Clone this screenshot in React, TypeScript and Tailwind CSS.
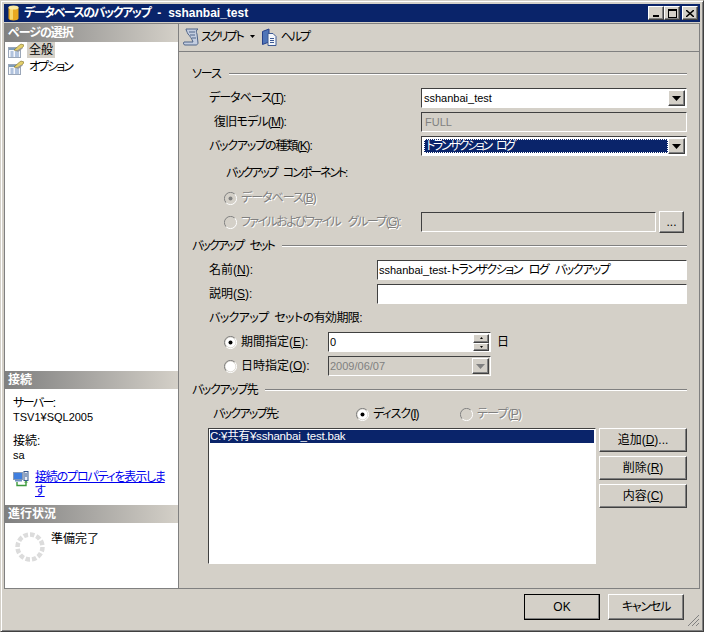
import React from 'react';

const sunken = 'border border-t-[#404040] border-l-[#404040] border-r-white border-b-white bg-white';
const sunkenOff = 'border border-t-[#404040] border-l-[#404040] border-r-white border-b-white bg-[#d4d0c8]';
const raised = 'border border-t-white border-l-white border-r-[#404040] border-b-[#404040] bg-[#d4d0c8] shadow-[inset_-1px_-1px_0_#808080]';
const disabledText = 'text-[#808080] [text-shadow:1px_1px_0_#fff]';

const U = ({ children }: { children: React.ReactNode }) => <span className="underline">{children}</span>;

const Row = ({ children, className = '' }: { children: React.ReactNode; className?: string }) => (
  <div className={`flex items-center h-5 mb-1 ${className}`}>{children}</div>
);

const Heading = ({ children }: { children: React.ReactNode }) => (
  <Row>
    <span className="mr-2 whitespace-nowrap">{children}</span>
    <div className="flex-1 h-[2px] border-t border-t-[#808080] border-b border-b-white" />
  </Row>
);

const Arrow = ({ off }: { off?: boolean }) => (
  <div className={`w-[17px] h-[16px] mr-[1px] flex items-center justify-center ${raised}`}>
    <svg width="9" height="5" viewBox="0 0 9 5"><path d="M0 0h9L4.5 5z" fill={off ? '#808080' : '#000'} /></svg>
  </div>
);

const Combo = ({ children, selected, width = 'w-[266px]' }: { children: React.ReactNode; selected?: boolean; width?: string }) => (
  <div className={`${width} h-5 flex items-center pl-[2px] ${sunken}`}>
    {selected ? (
      <div className="flex-1 h-[14px] bg-[#0a246a] text-white flex items-center pl-[1px] border border-dotted border-white leading-none tracking-[-2.300px] [word-spacing:4px]">{children}</div>
    ) : (
      <div className="flex-1 leading-none text-[11px]">{children}</div>
    )}
    <Arrow />
  </div>
);

const Radio = ({ checked, off }: { checked?: boolean; off?: boolean }) => (
  <svg width="13" height="13" viewBox="0 0 13 13" className="shrink-0">
    <path d="M10.8 2.2A6 6 0 0 0 2.2 10.8" fill="none" stroke="#808080" />
    <path d="M2.2 10.8A6 6 0 0 0 10.8 2.2" fill="none" stroke="#fff" />
    <circle cx="6.5" cy="6.5" r="5" fill={off ? '#d4d0c8' : '#fff'} />
    {checked && <circle cx="6.5" cy="6.5" r="2" fill={off ? '#808080' : '#000'} />}
  </svg>
);

const PageIcon = () => (
  <svg width="16" height="15" viewBox="0 0 16 15" className="shrink-0">
    <rect x="0.5" y="4.500" width="12" height="10" fill="#f4f6fa" stroke="#9aa6b8" />
    <path d="M1 6h11" stroke="#7f9db9" strokeWidth="2" />
    <path d="M2.500 9h3M7 9h4M2.500 11h3M7 11h4M2.500 13h3M7 13h4" stroke="#6f8fc0" />
    <path d="M6 7 11 2.500 13 1l3 1-1 2-5 4z" fill="#e3cf6b" stroke="#7a6c24" strokeWidth="0.600" />
    <path d="M8 8l5-3 2 0-4 3.500z" fill="#9a9a9a" />
  </svg>
);

const SectionHeader = ({ children }: { children: React.ReactNode }) => (
  <div className="h-[18px] pl-[3px] flex items-center font-bold text-white text-[12px] bg-gradient-to-r from-[#808080] to-[#d4d0c8] whitespace-nowrap">
    {children}
  </div>
);

const Spinner = () => (
  <svg width="32" height="32" viewBox="0 0 32 32" className="shrink-0">
    <circle cx="16" cy="16" r="12.500" fill="none" stroke="#dcdcdc" strokeWidth="4.500" strokeDasharray="4.500 2" />
  </svg>
);

const SideButton = ({ children }: { children: React.ReactNode }) => (
  <div className={`w-[88px] h-6 flex items-center justify-center mb-1 ${raised}`}>{children}</div>
);

export default function App() {
  return (
    <div className="w-[704px] h-[632px] bg-[#d4d0c8] text-[12px] text-black overflow-hidden border border-t-[#d4d0c8] border-l-[#d4d0c8] border-r-[#404040] border-b-[#404040] font-['Liberation_Sans','Noto_Sans_CJK_JP',sans-serif] [font-feature-settings:'palt'] shadow-[inset_1px_1px_0_#fff,inset_-1px_-1px_0_#808080]">
      <div className="p-[3px] pb-0 h-[626px] flex flex-col">
        {/* title bar */}
        <div className="h-[18px] bg-[#0a246a] flex items-center pl-[4px] pr-[2px] shrink-0">
          <svg width="11" height="16" viewBox="0 0 11 16" className="shrink-0">
            <path d="M0.500 2.500v11c0 2.500 10 2.500 10 0v-11z" fill="#e8a820" />
            <path d="M2 3v11.500h3V3z" fill="#f7d66a" />
            <ellipse cx="5.500" cy="2.500" rx="5" ry="2" fill="#fbe9a0" />
          </svg>
          <span className="ml-[5px] text-white font-bold whitespace-nowrap tracking-[-1.450px]">データベースのバックアップ</span>
          <span className="ml-[7px] text-white font-bold">-</span>
          <span className="ml-[7px] text-white font-bold">sshanbai_test</span>
          <div className="ml-auto flex">
            <div className={`w-4 h-[14px] flex items-end justify-center pb-[2px] ${raised}`}>
              <div className="w-[6px] h-[2px] bg-black" />
            </div>
            <div className={`w-4 h-[14px] flex items-center justify-center ${raised}`}>
              <div className="w-[9px] h-[9px] border border-black border-t-2" />
            </div>
            <div className={`w-4 h-[14px] ml-[2px] flex items-center justify-center ${raised}`}>
              <svg width="8" height="7" viewBox="0 0 8 7"><path d="M0 0 8 7M8 0 0 7" stroke="#000" strokeWidth="1.500" /></svg>
            </div>
          </div>
        </div>

        <div className="mt-[1px] h-[566px] flex shrink-0 border-b border-b-[#808080]">
          {/* left pane */}
          <div className="w-[175px] bg-white flex flex-col border-l border-l-[#808080] border-r border-r-[#808080] border-t border-t-[#808080]">
            <div className="h-[347px]">
              <SectionHeader><span className="tracking-[-1px]">ページの選択</span></SectionHeader>
              <div className="h-4 flex items-center pl-[3px]">
                <PageIcon />
                <span className="ml-[3px] px-[2px] bg-[#d4d0c8] text-[12px] leading-4">全般</span>
              </div>
              <div className="h-4 mt-[1px] flex items-center pl-[3px]">
                <PageIcon />
                <span className="ml-[5px] text-[12px] tracking-[-2px]">オプション</span>
              </div>
            </div>
            <div className="h-[134px]">
              <SectionHeader>接続</SectionHeader>
              <div className="pl-[8px] pt-[7px] leading-[14px]">
                <div className="tracking-[-1.600px]">サーバー:</div>
                <div className="text-[11px]">TSV1¥SQL2005</div>
                <div className="mt-[10px]">接続:</div>
                <div className="text-[11px]">sa</div>
                <div className="flex mt-[8px]">
                  <svg width="16" height="16" viewBox="0 0 16 16" className="shrink-0 mt-[1px]">
                    <rect x="0.500" y="1.500" width="9" height="7" fill="#3f7fe0" stroke="#8a9bb5" />
                    <rect x="2" y="8.500" width="7" height="2" fill="#6f8fc0" />
                    <rect x="11" y="0.500" width="4" height="9" fill="#e8ecf5" stroke="#35588f" />
                    <path d="M12 3h2M12 5h2" stroke="#35588f" />
                    <path d="M4 11v3.500h9V11" fill="none" stroke="#3c9a3c" strokeWidth="1.400" />
                    <path d="M11 11.500l2-2 2 2z" fill="#3c9a3c" />
                  </svg>
                  <a href="#" className="ml-[6px] w-[132px] text-[#0000ee] underline leading-[14px] tracking-[-1.200px]">接続のプロパティを表示します</a>
                </div>
              </div>
            </div>
            <div className="flex-1">
              <SectionHeader>進行状況</SectionHeader>
              <div className="flex pl-[9px] pt-[8px]">
                <Spinner />
                <span className="ml-[5px] text-[12px] leading-[16px]">準備完了</span>
              </div>
            </div>
          </div>

          {/* right pane */}
          <div className="flex-1 flex flex-col border-r border-r-[#808080] border-t border-t-[#808080]">
            <div className="h-[28px] flex items-center pl-[4px] pb-[2px] border-b border-b-[#808080] shrink-0">
              <svg width="16" height="18" viewBox="0 0 16 18" className="shrink-0">
                <path d="M3 1h12c-2 1-2 3-1 5l1 9c0 1-1 2-2 2H2c-1.500 0-2-2-1-3h9c-1-3-3-6-5-8-1-2-2-4-2-5z" fill="#c3cde0" stroke="#4f6488" />
                <path d="M6 4h6M7 7h5M9 10h4" stroke="#4f6488" />
              </svg>
              <span className="ml-[2px] whitespace-nowrap tracking-[-2px]">スクリプト</span>
              <svg width="5" height="3" viewBox="0 0 5 3" className="ml-[7px]"><path d="M0 0h5L2.500 3z" fill="#000" /></svg>
              <svg width="16" height="18" viewBox="0 0 16 18" className="ml-[7px] shrink-0">
                <path d="M0.500 3.500 7 1v13l-6.500 2.500z" fill="#4f74b8" stroke="#26408a" />
                <path d="M6 5.500h5l3 3v9H6z" fill="#f4f6fa" stroke="#3d5a94" />
                <path d="M8 10.500h4M8 12.500h4M8 14.500h4" stroke="#3d5a94" />
              </svg>
              <span className="ml-[3px] whitespace-nowrap tracking-[-2px]">ヘルプ</span>
            </div>

            <div className="pl-[13px] pt-[12px] w-[508px]">
              <Heading><span className="tracking-[-1px]">ソース</span></Heading>
              <Row>
                <span className="ml-[17px] w-[212px] tracking-[-1px]">データベース(<U>T</U>):</span>
                <Combo>sshanbai_test</Combo>
              </Row>
              <Row>
                <span className="ml-[22px] w-[207px] tracking-[-0.800px]">復旧モデル(<U>M</U>):</span>
                <div className={`w-[266px] h-5 flex items-center pl-[3px] text-[#808080] text-[11px] ${sunkenOff}`}>FULL</div>
              </Row>
              <Row>
                <span className="ml-[17px] w-[212px] tracking-[-1.200px]">バックアップの種類(<U>K</U>):</span>
                <Combo selected>トランザクション ログ</Combo>
              </Row>
              <Row className="pt-[6px] mb-2">
                <span className="ml-[34px] tracking-[-2.100px] [word-spacing:5px]">バックアップ コンポーネント:</span>
              </Row>
              <Row>
                <span className="ml-[32px] flex items-center">
                  <Radio checked off />
                  <span className={`ml-[4px] tracking-[-1px] ${disabledText}`}>データベース(<U>B</U>)</span>
                </span>
              </Row>
              <Row>
                <span className="ml-[32px] w-[197px] flex items-center">
                  <Radio off />
                  <span className={`ml-[4px] whitespace-nowrap tracking-[-1.600px] [word-spacing:6px] ${disabledText}`}>ファイルおよびファイル グループ(<U>G</U>):</span>
                </span>
                <div className={`w-[235px] h-5 ${sunkenOff}`} />
                <div className={`ml-[3px] w-[25px] h-[22px] flex items-center justify-center ${raised}`}>...</div>
              </Row>
              <Heading><span className="tracking-[-2px] [word-spacing:5px]">バックアップ セット</span></Heading>
              <Row>
                <span className="ml-[17px] w-[168px]">名前(<U>N</U>):</span>
                <div className={`w-[310px] h-5 flex items-center pl-[1px] whitespace-nowrap ${sunken}`}>
                  <span className="text-[11px]">sshanbai_test-</span>
                  <span className="tracking-[-1.500px] [word-spacing:5px]">トランザクション ログ バックアップ</span>
                </div>
              </Row>
              <Row>
                <span className="ml-[17px] w-[168px]">説明(<U>S</U>):</span>
                <div className={`w-[310px] h-5 ${sunken}`} />
              </Row>
              <Row>
                <span className="ml-[17px] tracking-[-0.600px] [word-spacing:3px]">バックアップ セットの有効期限:</span>
              </Row>
              <Row>
                <span className="ml-[32px] w-[104px] flex items-center">
                  <Radio checked />
                  <span className="ml-[4px] whitespace-nowrap">期間指定(<U>E</U>):</span>
                </span>
                <div className={`w-[163px] h-5 flex items-center pl-[1px] ${sunken}`}>
                  <span className="flex-1 text-[11px]">0</span>
                  <div className="w-4 h-[17px] flex flex-col mr-[1px]">
                    <div className={`h-[9px] flex items-center justify-center ${raised}`}>
                      <svg width="3" height="2" viewBox="0 0 3 2"><path d="M0 2h3L1.500 0z" fill="#000" /></svg>
                    </div>
                    <div className={`h-[8px] flex items-center justify-center ${raised}`}>
                      <svg width="3" height="2" viewBox="0 0 3 2"><path d="M0 0h3L1.500 2z" fill="#000" /></svg>
                    </div>
                  </div>
                </div>
                <span className="ml-[6px]">日</span>
              </Row>
              <Row>
                <span className="ml-[32px] w-[104px] flex items-center">
                  <Radio />
                  <span className="ml-[4px] whitespace-nowrap">日時指定(<U>O</U>):</span>
                </span>
                <div className={`w-[163px] h-5 flex items-center pl-[1px] text-[#808080] text-[11px] ${sunkenOff}`}>
                  <span className="flex-1">2009/06/07</span>
                  <Arrow off />
                </div>
              </Row>
              <Heading><span className="tracking-[-1.400px]">バックアップ先</span></Heading>
              <Row>
                <span className="ml-[21px] w-[143px] tracking-[-1.700px]">バックアップ先:</span>
                <span className="w-[104px] flex items-center">
                  <Radio checked />
                  <span className="ml-[4px] tracking-[-1px]">ディスク(<U>I</U>)</span>
                </span>
                <span className="flex items-center">
                  <Radio off />
                  <span className={`ml-[4px] tracking-[-0.800px] ${disabledText}`}>テープ(<U>P</U>)</span>
                </span>
              </Row>
              <div className="flex">
                <div className={`ml-[16px] w-[388px] h-[136px] p-[1px] ${sunken}`}>
                  <div className="h-[13px] bg-[#0a246a] text-white text-[11.500px] leading-[13px] whitespace-nowrap tracking-[-0.200px]">C:¥共有¥sshanbai_test.bak</div>
                </div>
                <div className="ml-[3px]">
                  <SideButton>追加(<U>D</U>)...</SideButton>
                  <SideButton>削除(<U>R</U>)</SideButton>
                  <SideButton>内容(<U>C</U>)</SideButton>
                </div>
              </div>
            </div>
          </div>
        </div>

        {/* footer */}
        <div className="flex-1 relative flex justify-end pt-[5px] pr-[16px]">
          <div className={`w-[76px] h-[26px] mr-[8px] flex items-center justify-center outline outline-1 outline-black -outline-offset-1 ${raised}`}>OK</div>
          <div className={`w-[76px] h-[26px] flex items-center justify-center tracking-[-1.200px] ${raised}`}>キャンセル</div>
          <svg width="13" height="13" viewBox="0 0 13 13" className="absolute right-0 bottom-0">
            <path d="M12 1 1 12M12 5 5 12M12 9 9 12" stroke="#808080" />
          </svg>
        </div>
      </div>
    </div>
  );
}
